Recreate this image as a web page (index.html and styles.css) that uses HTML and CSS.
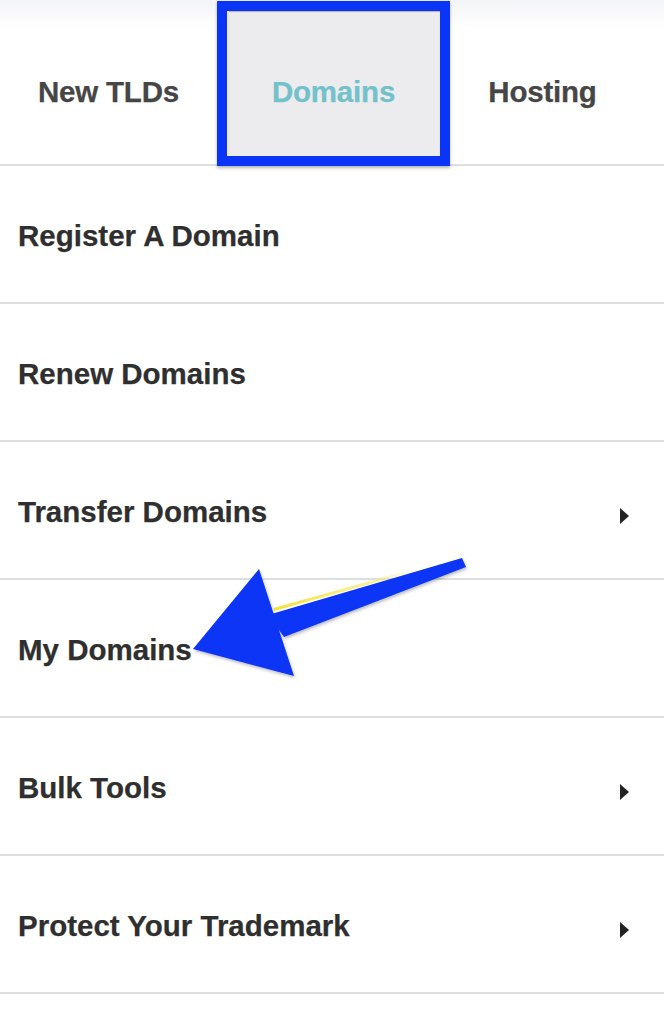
FILE: index.html
```html
<!DOCTYPE html>
<html lang="en">
<head>
<meta charset="utf-8">
<title>Domains menu</title>
<link rel="stylesheet" href="styles.css">
</head>
<body>
<div class="page">
  <nav class="tabs">
    <div class="tab">New TLDs</div>
    <div class="tab tab-active">Domains</div>
    <div class="tab">Hosting</div>
  </nav>
  <ul class="menu">
    <li class="item"><span>Register A Domain</span></li>
    <li class="item"><span>Renew Domains</span></li>
    <li class="item"><span>Transfer Domains</span><i class="caret"></i></li>
    <li class="item"><span>My Domains</span></li>
    <li class="item"><span>Bulk Tools</span><i class="caret"></i></li>
    <li class="item"><span>Protect Your Trademark</span><i class="caret"></i></li>
  </ul>
  <div class="highlight-box"></div>
  <svg class="annotation" width="664" height="1022" viewBox="0 0 664 1022" xmlns="http://www.w3.org/2000/svg">
    <defs>
      <linearGradient id="yl" x1="276" y1="0" x2="420" y2="0" gradientUnits="userSpaceOnUse">
        <stop offset="0" stop-color="#f4e23a" stop-opacity="1"/>
        <stop offset="0.7" stop-color="#f4e86a" stop-opacity="0.6"/>
        <stop offset="1" stop-color="#f6f0a0" stop-opacity="0"/>
      </linearGradient>
      <filter id="sh" x="-10%" y="-10%" width="130%" height="130%">
        <feDropShadow dx="1" dy="2" stdDeviation="1.5" flood-color="#000" flood-opacity="0.25"/>
      </filter>
    </defs>
    <line x1="274" y1="609.5" x2="420" y2="568.5" stroke="url(#yl)" stroke-width="3"/>
    <g fill="#0a34f6" filter="url(#sh)">
      <polygon points="268,615 462,558 466,567 284,637"/>
      <polygon points="193,649 259,569 294,676"/>
    </g>
  </svg>
</div>
</body>
</html>
```
FILE: styles.css
```css
html, body {
  margin: 0;
  padding: 0;
  background: #ffffff;
}

.page {
  position: relative;
  width: 664px;
  height: 1022px;
  overflow: hidden;
  font-family: "Liberation Sans", Arial, Helvetica, sans-serif;
  font-weight: bold;
  font-size: 29.5px;
  -webkit-text-stroke: 0.25px currentColor;
  background: linear-gradient(#f3f4f7 0px, #ffffff 28px, #ffffff 100%);
}

.tabs {
  display: grid;
  grid-template-columns: 217px 233px 185px;
  height: 164px;
  border-bottom: 2px solid #dedede;
}

.tab {
  text-align: center;
  line-height: 34px;
  padding-top: 75px;
  color: #464646;
  letter-spacing: -0.2px;
}

.tab-active {
  color: #72c1cb;
  background: #ececee;
}

.menu {
  list-style: none;
  margin: 0;
  padding: 0;
}

.item {
  display: flex;
  justify-content: space-between;
  align-items: flex-start;
  height: 138px;
  box-sizing: border-box;
  padding: 53px 35px 0 18px;
  line-height: 34px;
  color: #2f2f2f;
  border-bottom: 2px solid #dedede;
}

.caret {
  display: block;
  width: 0;
  height: 0;
  margin-top: 13px;
  border-left: 9px solid #222222;
  border-top: 8px solid transparent;
  border-bottom: 8px solid transparent;
}

.highlight-box {
  position: absolute;
  left: 217px;
  top: 1px;
  width: 233px;
  height: 165px;
  box-sizing: border-box;
  border: 10px solid #0a34f6;
  box-shadow: 0 2px 3px rgba(0, 0, 0, 0.3), inset 2px 0 0 #efe8a4, inset 0 1px 1px rgba(110, 100, 50, 0.45);
}

.annotation {
  position: absolute;
  left: 0;
  top: 0;
  pointer-events: none;
}
```
